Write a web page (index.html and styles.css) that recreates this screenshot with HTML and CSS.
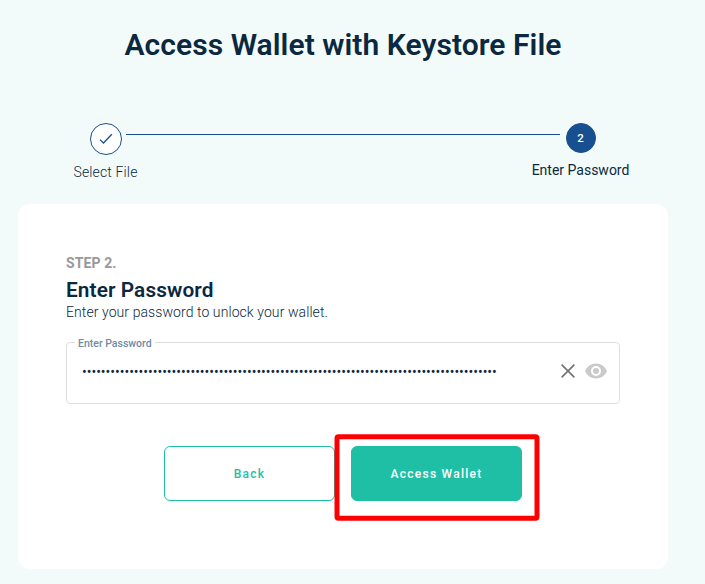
FILE: index.html
```html
<!DOCTYPE html>
<html lang="en">
<head>
<meta charset="utf-8">
<title>Access Wallet</title>
<link rel="stylesheet" href="styles.css">
</head>
<body>
<main class="page">
  <h1 class="title">Access Wallet with Keystore File</h1>
  <div class="stepper">
    <div class="step done">
      <span class="badge"><svg width="14" height="12" viewBox="0 0 14 12"><path d="M1 6.6 4.5 10 12.8 1.3"/></svg></span>
      <span class="label">Select File</span>
    </div>
    <span class="line"></span>
    <div class="step active">
      <span class="badge">2</span>
      <span class="label">Enter Password</span>
    </div>
  </div>
  <section class="card">
    <div class="step-name">STEP 2.</div>
    <h2 class="heading">Enter Password</h2>
    <p class="desc">Enter your password to unlock your wallet.</p>
    <fieldset class="field">
      <legend>Enter Password</legend>
      <div class="row">
        <div class="dots">••••••••••••••••••••••••••••••••••••••••••••••••••••••••••••••••••••••••••••••••••••••••</div>
        <svg class="clear" width="14" height="14" viewBox="0 0 14 14"><path d="M.6.6 13.4 13.4M13.4.6.6 13.4"/></svg>
        <svg class="eye" width="24" height="24" viewBox="0 0 24 24"><path d="M12 9a3 3 0 0 0-3 3 3 3 0 0 0 3 3 3 3 0 0 0 3-3 3 3 0 0 0-3-3m0 8a5 5 0 0 1-5-5 5 5 0 0 1 5-5 5 5 0 0 1 5 5 5 5 0 0 1-5 5m0-12.5C7 4.500 2.730 7.610 1 12c1.730 4.390 6 7.500 11 7.500s9.270-3.110 11-7.500c-1.730-4.390-6-7.500-11-7.500z"/></svg>
      </div>
    </fieldset>
    <div class="actions">
      <button class="btn outline">Back</button>
      <button class="btn solid">Access Wallet<span class="highlight"></span></button>
    </div>
  </section>
</main>
</body>
</html>
```
FILE: styles.css
```css
* { box-sizing: border-box; }
body {
  margin: 0;
  background: #f2fbfa;
  color: #0b2840;
  font-family: Roboto, sans-serif;
}
.page { width: 650px; margin-left: 18px; height: 584px; }
.title {
  margin: 0;
  padding-top: 25px;
  text-align: center;
  font-size: 30px;
  line-height: 40px;
  font-weight: 600;
  letter-spacing: .06px;
  white-space: nowrap;
}
.stepper {
  display: flex;
  justify-content: space-between;
  height: 139px;
  padding: 58px 39px 0 55px;
}
.step { display: flex; flex-direction: column; align-items: center; font-size: 14px; line-height: 18px; white-space: nowrap; }
.badge {
  display: flex;
  align-items: center;
  justify-content: center;
  border-radius: 50%;
  border: 1px solid #184f90;
}
.done .badge { width: 32px; height: 32px; background: #fff; }
.done { width: 65px; }
.done svg { fill: none; stroke: #184f90; stroke-width: 1.3; }
.done .label { margin-top: 8px; font-weight: 300; letter-spacing: .15px; }
.active { width: 97px; }
.active .badge { width: 30px; height: 30px; padding-bottom: 1px; background: #184f90; color: #fff; font-size: 11.5px; line-height: 14px; font-weight: 500; }
.active .label { margin-top: 8px; }
.line { flex: 1; height: 1px; margin: 11px -28px 0 -12px; background: #184f90; }
.card {
  height: 365px;
  padding: 50px 48px 0;
  border-radius: 12px;
  background: #fff;
}
.step-name { color: #999; font-size: 14px; line-height: 18px; font-weight: 700; letter-spacing: .1px; }
.heading { margin: 6px 0 0; font-size: 20.8px; line-height: 24px; font-weight: 600; letter-spacing: .1px; }
.desc { margin: 1px 0 0; font-size: 14px; line-height: 18px; font-weight: 300; letter-spacing: .08px; }
.field {
  height: 68px;
  margin: 15px 0 0;
  padding: 0 11px 0 15px;
  border: 1px solid #dedede;
  border-radius: 4px;
}
.field legend {
  margin-left: -7px;
  padding: 2px 3px 0;
  color: #6e8ba8;
  font-size: 10.5px;
  line-height: 11px;
  font-weight: 500;
}
.row { display: flex; align-items: center; height: 44px; }
.dots { flex: 1; padding-top: 1px; font-size: 14px; line-height: 20px; letter-spacing: -.01px; }
.clear { fill: none; stroke: #707070; stroke-width: 1.5; margin-right: 9px; }
.eye { fill: #cacaca; }
.actions { display: flex; justify-content: center; gap: 16px; margin-top: 42px; }
.btn {
  position: relative;
  width: 171px;
  height: 55px;
  border: 1px solid #1fbfa5;
  border-radius: 6px;
  font: 500 12px Roboto, sans-serif;
  letter-spacing: 1.25px;
}
.outline { background: #fff; color: #1fbfa5; }
.solid { background: #1fbfa5; color: #fff; }
.highlight {
  position: absolute;
  left: -18px;
  top: -13px;
  width: 206px;
  height: 87px;
  border: 5px solid #f00;
  border-radius: 4px;
  transform: scale(.995);
}
```
